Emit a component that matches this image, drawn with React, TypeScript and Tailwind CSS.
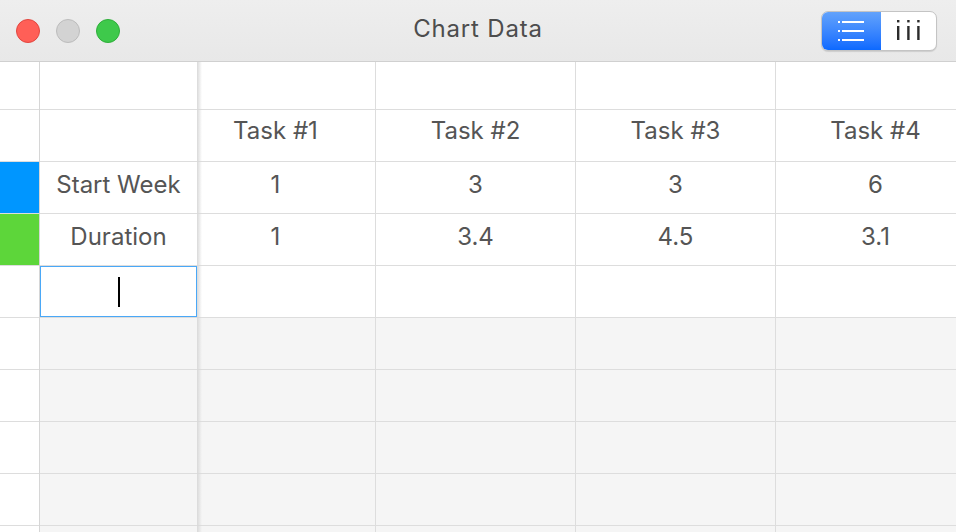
import React from "react";

const tasks = ["Task #1", "Task #2", "Task #3", "Task #4"];
const rows = [
  { label: "Start Week", color: "bg-[#0096ff]", values: ["1", "3", "3", "6"] },
  { label: "Duration", color: "bg-[#5dd63a]", values: ["1", "3.4", "4.5", "3.1"] },
];
const emptyGrayRows = 4;

function ListIcon() {
  return (
    <svg width="28" height="22" viewBox="0 0 28 22" fill="none">
      <rect x="0" y="1" width="2" height="2" fill="white" />
      <rect x="0" y="10" width="2" height="2" fill="white" />
      <rect x="0" y="19" width="2" height="2" fill="white" />
      <rect x="4" y="1" width="22" height="2" fill="white" />
      <rect x="4" y="10" width="22" height="2" fill="white" />
      <rect x="4" y="19" width="22" height="2" fill="white" />
    </svg>
  );
}

function ColumnsIcon() {
  return (
    <svg width="26" height="24" viewBox="0 0 26 24" fill="#2b2b2b">
      <rect x="1" y="0" width="2.4" height="2.4" />
      <rect x="1" y="6" width="2.4" height="14" />
      <rect x="11.2" y="0" width="2.4" height="2.4" />
      <rect x="11.2" y="6" width="2.4" height="14" />
      <rect x="21.2" y="0" width="2.4" height="2.4" />
      <rect x="21.2" y="6" width="2.4" height="14" />
    </svg>
  );
}

function TitleBar() {
  return (
    <div className="relative flex h-[62px] items-center justify-between border-b border-[#d0d0d0] bg-gradient-to-b from-[#eeeeee] to-[#e8e8e8]">
      <div className="flex gap-[16px] pl-[16px]">
        <span className="h-[24px] w-[24px] rounded-full border border-[#e2463f] bg-[#ff5f57]" />
        <span className="h-[24px] w-[24px] rounded-full border border-[#bcbcbc] bg-[#d3d3d3]" />
        <span className="h-[24px] w-[24px] rounded-full border border-[#2eae3a] bg-[#3ec94b]" />
      </div>
      <div className="pointer-events-none absolute inset-x-0 top-[11px] text-center text-[24px] tracking-[0.8px] text-[#4d4d4d]">
        Chart Data
      </div>
      <div className="mr-[19px] flex h-[40px] w-[116px] overflow-hidden rounded-[7px] border border-[#c4c4c4] bg-white shadow-[0_1px_1px_rgba(0,0,0,0.12)]">
        <div className="flex w-[59px] items-center justify-center bg-gradient-to-b from-[#62a2fb] to-[#0b69ff]">
          <ListIcon />
        </div>
        <div className="flex flex-1 items-center justify-center pt-[2px]">
          <ColumnsIcon />
        </div>
      </div>
    </div>
  );
}

function Cell({ children, className = "" }: { children?: React.ReactNode; className?: string }) {
  return (
    <div className={`flex items-center justify-center border-b border-[#dddddd] ${className}`}>
      {children}
    </div>
  );
}

export default function App() {
  return (
    <div
      className="h-[532px] w-[956px] overflow-hidden bg-white text-[24px] text-[#555555]"
      style={{ fontFamily: "Inter, 'Liberation Sans', sans-serif" }}
    >
      <TitleBar />
      <div className="flex">
        {/* row markers */}
        <div className="flex w-[40px] flex-col border-r border-[#d6d6d6]">
          <Cell className="h-[48px]" />
          <Cell className="h-[52px]" />
          {rows.map((r) => (
            <Cell key={r.label} className={`h-[52px] ${r.color}`} />
          ))}
          <Cell className="h-[52px]" />
          {Array.from({ length: emptyGrayRows + 1 }).map((_, i) => (
            <Cell key={i} className="h-[52px]" />
          ))}
        </div>
        {/* frozen label column */}
        <div className="flex w-[157px] flex-col">
          <Cell className="h-[48px]" />
          <Cell className="h-[52px]" />
          {rows.map((r) => (
            <Cell key={r.label} className="h-[52px] pb-[6px]">
              {r.label}
            </Cell>
          ))}
          <Cell className="h-[52px]">
            <div className="flex h-full w-full items-center justify-center border border-[#4aa8f7]">
              <span className="h-[30px] w-[2px] bg-black" />
            </div>
          </Cell>
          {Array.from({ length: emptyGrayRows + 1 }).map((_, i) => (
            <Cell key={i} className="h-[52px] bg-[#f5f5f5]" />
          ))}
        </div>
        {/* scrolled task columns */}
        <div className="relative flex-1 overflow-hidden">
          <div className="ml-[-21px] flex">
            {tasks.map((t, c) => (
              <div key={t} className="flex w-[200px] shrink-0 flex-col border-r border-[#dddddd]">
                <Cell className="h-[48px]" />
                <Cell className="h-[52px] pb-[9px]">{t}</Cell>
                {rows.map((r) => (
                  <Cell key={r.label} className="h-[52px] pb-[6px]">
                    {r.values[c]}
                  </Cell>
                ))}
                <Cell className="h-[52px]" />
                {Array.from({ length: emptyGrayRows + 1 }).map((_, i) => (
                  <Cell key={i} className="h-[52px] bg-[#f5f5f5]" />
                ))}
              </div>
            ))}
          </div>
          <div className="pointer-events-none absolute inset-y-0 left-0 w-[5px] bg-gradient-to-r from-[#d9d9d9] to-transparent" />
        </div>
      </div>
    </div>
  );
}
